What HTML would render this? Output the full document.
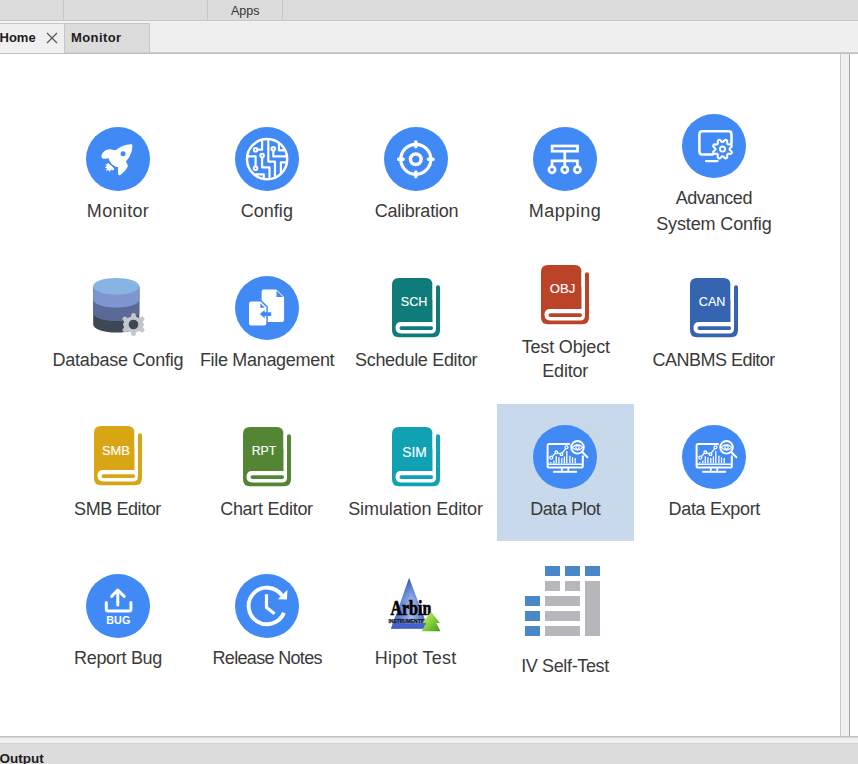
<!DOCTYPE html>
<html><head><meta charset="utf-8"><style>
*{margin:0;padding:0;box-sizing:border-box}
html,body{width:858px;height:764px;overflow:hidden;background:#fff;font-family:"Liberation Sans",sans-serif}
.abs{position:absolute}
.lb{position:absolute;width:400px;text-align:center;font-size:18px;line-height:22px;color:#3a3a3a;white-space:nowrap}
</style></head><body>
<!-- top bar -->
<div class="abs" style="left:0;top:0;width:858px;height:20px;background:#dcdcdc"></div>
<div class="abs" style="left:0;top:20px;width:858px;height:1px;background:#c6c6c6"></div>
<div class="abs" style="left:63px;top:0;width:1px;height:20px;background:#c8c8c8"></div>
<div class="abs" style="left:207px;top:0;width:1px;height:20px;background:#c8c8c8"></div>
<div class="abs" style="left:282px;top:0;width:1px;height:20px;background:#c8c8c8"></div>
<div class="abs" id="apps" style="left:231px;top:3px;font-size:12.5px;line-height:16px;color:#333">Apps</div>
<!-- tab row -->
<div class="abs" style="left:0;top:21px;width:858px;height:32px;background:#f0f0f0"></div>
<div class="abs" style="left:0;top:21px;width:150px;height:2px;background:#f4f4f4"></div>
<div class="abs" style="left:0;top:23px;width:64px;height:1px;background:#c8c8c8"></div>
<div class="abs" style="left:64px;top:23px;width:86px;height:30px;background:#dcdcdc;border:1px solid #c6c6c6;border-bottom:none"></div>
<div class="abs" id="home" style="left:-0.5px;top:30px;font-size:13px;font-weight:bold;line-height:16px;color:#1e1a22">Home</div>
<svg class="abs" style="left:46px;top:32px" width="12" height="12" viewBox="0 0 12 12"><path d="M1 1L11 11M11 1L1 11" stroke="#5a5a5a" stroke-width="1.3"/></svg>
<div class="abs" id="montab" style="left:71px;top:30px;font-size:13px;font-weight:bold;line-height:16px;color:#1e1a22;letter-spacing:0.4px">Monitor</div>
<div class="abs" style="left:64px;top:52px;width:794px;height:1px;background:#cbcbcb"></div>
<div class="abs" style="left:0;top:53px;width:858px;height:1px;background:#c0c0c0"></div>
<!-- content -->
<div class="abs" style="left:0;top:54px;width:840px;height:683px;background:#fff"></div>
<div class="abs" style="left:840px;top:54px;width:1px;height:683px;background:#c8c8c8"></div>
<div class="abs" style="left:841px;top:54px;width:8px;height:683px;background:#f0f0f0"></div>
<div class="abs" style="left:849px;top:54px;width:1px;height:683px;background:#a6a6a6"></div>
<div class="abs" style="left:0;top:736px;width:858px;height:1px;background:#c2c2c2"></div><div class="abs" style="left:0;top:737px;width:858px;height:1px;background:#d6d6d6"></div>
<div class="abs" style="left:0;top:738px;width:858px;height:5px;background:#f0f0f0"></div>
<div class="abs" style="left:0;top:743px;width:858px;height:1px;background:#d2d2d2"></div>
<div class="abs" style="left:0;top:744px;width:858px;height:20px;background:#dcdcdc"></div>
<div class="abs" id="output" style="left:-0.5px;top:751px;font-size:13.5px;font-weight:bold;line-height:16px;color:#1e1a22">Output</div>
<!-- highlight -->
<div class="abs" style="left:497px;top:404px;width:137px;height:137px;background:#c7d9ea"></div>
<!-- Row 1 -->
<svg class="abs" style="left:86px;top:127px" width="64" height="64" viewBox="0 0 64 64">
<circle cx="32" cy="32" r="32" fill="#4189f4"/>
<path fill="#fff" d="M45.8,17.2 C41,16.8 34.5,19 29.6,23.2 L23.6,22.2 C19.6,22.2 16.6,25 15.6,28 C15,30.4 16,31.8 17.6,31.8 L22.5,31.6 C23.2,35.5 26.5,39.8 31.9,40.6 L32,46.4 C32.2,48.2 33.8,48.6 35,47.6 C38.2,44.6 41.8,41 41.8,38.4 L40,34.3 C44.2,30 46.8,23.5 46.3,18 Z"/>
<circle cx="37.1" cy="26.7" r="2.5" fill="#4189f4"/>
<path fill="#fff" d="M25.6,38.6 C24.2,37.8 23.2,37 22.4,36.2 L19.6,37.4 L20.8,39 L18.8,40.6 L21,41.4 L19.8,43.8 L22.6,42.9 L23.4,45 L25,42.8 L27.6,43.4 L28,41.6 Z"/>
<path d="M22,31.4 C22.6,35.8 26.2,40.2 32,41.1" fill="none" stroke="#4189f4" stroke-width="1.3"/>
</svg>
<svg class="abs" style="left:235px;top:127px" width="64" height="64" viewBox="0 0 64 64">
<circle cx="32" cy="32" r="32" fill="#4189f4"/>
<g fill="none" stroke="#fff" stroke-width="2.2" stroke-linejoin="round">
<circle cx="32.1" cy="32.2" r="20.1" stroke-width="2.5"/>
<path d="M33.3,12 V34.6 H40 V52"/>
<path d="M38.3,23.6 V29.4 H52"/>
<path d="M43.9,15 V23.3 H49.5"/>
<path d="M52,35.3 H45.9 V47"/>
<path d="M22.4,22.7 H27.1 V12.5"/>
<path d="M27.1,30.5 V40.4 H34.5 V52.5"/>
<path d="M12,29.4 H20.6 V39.3"/>
<path d="M20,47.4 H28.8 V52.3"/>
</g>
<g fill="#4189f4" stroke="#fff" stroke-width="2">
<circle cx="38.3" cy="21.8" r="1.8"/>
<circle cx="20.6" cy="22.7" r="1.8"/>
<circle cx="27.1" cy="28.6" r="1.8"/>
<circle cx="20.6" cy="41.2" r="1.8"/>
</g>
</svg>
<svg class="abs" style="left:384px;top:127px" width="64" height="64" viewBox="0 0 64 64">
<circle cx="32" cy="32" r="32" fill="#4189f4"/>
<g fill="none" stroke="#fff" stroke-width="3">
<circle cx="31.8" cy="32.3" r="15" stroke-width="3.2"/>
<circle cx="31.8" cy="32.3" r="5.3" stroke-width="3.5"/>
<path d="M31.8,15 V19.6 M31.8,45 V49.6 M14.6,32.3 H19.2 M44.4,32.3 H49" stroke-width="3.6" stroke-linecap="round"/>
</g>
</svg>
<svg class="abs" style="left:533px;top:127px" width="64" height="64" viewBox="0 0 64 64">
<circle cx="32" cy="32" r="32" fill="#4189f4"/>
<g fill="none" stroke="#fff" stroke-width="2.7">
<rect x="19.1" y="19" width="25.4" height="5.2"/>
<path d="M31.8,24.2 V39.6 M19,39.6 V33.8 H44.4 V39.6"/>
<circle cx="19" cy="42.7" r="3.1"/>
<circle cx="31.8" cy="42.7" r="3.1"/>
<circle cx="44.4" cy="42.7" r="3.1"/>
</g>
</svg>
<svg class="abs" style="left:682px;top:114px" width="64" height="64" viewBox="0 0 64 64">
<circle cx="32" cy="32" r="32" fill="#4189f4"/>
<g fill="none" stroke="#fff" stroke-width="2.5" stroke-linecap="round">
<path d="M30.6,40.6 H20.4 Q17.4,40.6 17.4,37.6 V20.2 Q17.4,17.2 20.4,17.2 H46.5 Q49.5,17.2 49.5,20.2 V29.6"/>
<path d="M24,47.1 H35.6" stroke-width="2.1"/>
</g>
<path d="M47.60,35.10 L47.63,35.38 L47.72,35.67 L47.93,35.98 L48.31,36.34 L48.84,36.76 L49.34,37.22 L49.66,37.68 L49.78,38.12 L49.76,38.52 L49.65,38.89 L49.46,39.23 L49.19,39.53 L48.81,39.75 L48.26,39.85 L47.57,39.82 L46.89,39.75 L46.37,39.73 L46.01,39.80 L45.74,39.94 L45.52,40.12 L45.34,40.34 L45.20,40.61 L45.13,40.97 L45.15,41.49 L45.22,42.17 L45.25,42.86 L45.15,43.41 L44.93,43.79 L44.63,44.06 L44.29,44.25 L43.92,44.36 L43.52,44.38 L43.08,44.26 L42.62,43.94 L42.16,43.44 L41.74,42.91 L41.38,42.53 L41.07,42.32 L40.78,42.23 L40.50,42.20 L40.22,42.23 L39.93,42.32 L39.62,42.53 L39.26,42.91 L38.84,43.44 L38.38,43.94 L37.92,44.26 L37.48,44.38 L37.08,44.36 L36.71,44.25 L36.37,44.06 L36.07,43.79 L35.85,43.41 L35.75,42.86 L35.78,42.17 L35.85,41.49 L35.87,40.97 L35.80,40.61 L35.66,40.34 L35.48,40.12 L35.26,39.94 L34.99,39.80 L34.63,39.73 L34.11,39.75 L33.43,39.82 L32.74,39.85 L32.19,39.75 L31.81,39.53 L31.54,39.23 L31.35,38.89 L31.24,38.52 L31.22,38.12 L31.34,37.68 L31.66,37.22 L32.16,36.76 L32.69,36.34 L33.07,35.98 L33.28,35.67 L33.37,35.38 L33.40,35.10 L33.37,34.82 L33.28,34.53 L33.07,34.22 L32.69,33.86 L32.16,33.44 L31.66,32.98 L31.34,32.52 L31.22,32.08 L31.24,31.68 L31.35,31.31 L31.54,30.97 L31.81,30.67 L32.19,30.45 L32.74,30.35 L33.43,30.38 L34.11,30.45 L34.63,30.47 L34.99,30.40 L35.26,30.26 L35.48,30.08 L35.66,29.86 L35.80,29.59 L35.87,29.23 L35.85,28.71 L35.78,28.03 L35.75,27.34 L35.85,26.79 L36.07,26.41 L36.37,26.14 L36.71,25.95 L37.08,25.84 L37.48,25.82 L37.92,25.94 L38.38,26.26 L38.84,26.76 L39.26,27.29 L39.62,27.67 L39.93,27.88 L40.22,27.97 L40.50,28.00 L40.78,27.97 L41.07,27.88 L41.38,27.67 L41.74,27.29 L42.16,26.76 L42.62,26.26 L43.08,25.94 L43.52,25.82 L43.92,25.84 L44.29,25.95 L44.63,26.14 L44.93,26.41 L45.15,26.79 L45.25,27.34 L45.22,28.03 L45.15,28.71 L45.13,29.23 L45.20,29.59 L45.34,29.86 L45.52,30.08 L45.74,30.26 L46.01,30.40 L46.37,30.47 L46.89,30.45 L47.57,30.38 L48.26,30.35 L48.81,30.45 L49.19,30.67 L49.46,30.97 L49.65,31.31 L49.76,31.68 L49.78,32.08 L49.66,32.52 L49.34,32.98 L48.84,33.44 L48.31,33.86 L47.93,34.22 L47.72,34.53 L47.63,34.82 Z" fill="none" stroke="#fff" stroke-width="2.1" stroke-linejoin="round"/>
<circle cx="40.5" cy="35.1" r="2.6" fill="none" stroke="#fff" stroke-width="1.8"/>
</svg>
<!-- Row 2 -->
<svg class="abs" style="left:78px;top:268px" width="80" height="80" viewBox="0 0 80 80">
<path d="M15.2,18.3 V56.5 A23,8 0 0 0 61.3,56.5 V18.3 Z" fill="#3d4854"/>
<path d="M15.2,18.3 V45 A23,8 0 0 0 61.3,45 V18.3 Z" fill="#5a6a96"/>
<path d="M15.2,18.3 V31.6 A23,8 0 0 0 61.3,31.6 V18.3 Z" fill="#7f95cf"/>
<ellipse cx="38.2" cy="18.3" rx="23" ry="8.4" fill="#87b4e2"/>
<g transform="translate(55.5,56.5)">
<path fill="#c3c7cb" d="M-1.8,-11.3 H1.8 L2.6,-7.8 L5.9,-6.4 L8.9,-8.3 L11.3,-5.8 L9.4,-2.8 L10.5,0 L9.4,2.8 L11.3,5.8 L8.9,8.3 L5.9,6.4 L2.6,7.8 L1.8,11.3 H-1.8 L-2.6,7.8 L-5.9,6.4 L-8.9,8.3 L-11.3,5.8 L-9.4,2.8 L-10.5,0 L-9.4,-2.8 L-11.3,-5.8 L-8.9,-8.3 L-5.9,-6.4 L-2.6,-7.8 Z"/>
<circle r="4.8" fill="#3d4854"/>
</g>
</svg>
<svg class="abs" style="left:235px;top:276px" width="64" height="64" viewBox="0 0 64 64">
<circle cx="32" cy="32" r="32" fill="#4189f4"/>
<path fill="#fff" d="M28.6,13.5 H41.5 L49.1,21 V43.9 Q49.1,45.9 47.1,45.9 H28.6 Q26.6,45.9 26.6,43.9 V15.5 Q26.6,13.5 28.6,13.5 Z"/>
<path fill="#4189f4" d="M41.5,14.6 L48,21 H41.5 Z"/>
<path fill="#fff" stroke="#4189f4" stroke-width="3" paint-order="stroke" d="M16,25.5 H25.6 L31.3,31.2 V47.4 Q31.3,49.4 29.3,49.4 H16 Q14,49.4 14,47.4 V27.5 Q14,25.5 16,25.5 Z"/>
<path fill="#4189f4" d="M25.3,27.2 L29.8,31.7 H25.3 Z"/>
<path fill="#4189f4" d="M24.8,38.1 L29.7,33.9 V36.2 H36.2 V40.1 H29.7 V42.3 Z"/>
</svg>
<svg class="abs" style="left:392.2px;top:278.1px" width="50" height="62" viewBox="0 0 50 62">
<path fill="#0f7b7a" d="M0,7 Q0,0 7,0 H33.5 Q40.5,0 40.5,7 V22 H44 V9.3 Q44,7.3 46,7.3 Q48,7.3 48,9.3 V52.3 Q48,59.3 41,59.3 H7 Q0,59.3 0,52.3 Z"/>
<path fill="#fff" d="M40.5,7 H44 V50.4 Q44,55.4 39,55.4 H9.2 Q3.5,55.4 3.5,49.7 Q3.5,44 9.2,44 H40.5 Z"/>
<rect x="7.5" y="48.2" width="33.6" height="3.8" rx="1.9" fill="#0f7b7a"/>
<text x="22.05" y="28.3" text-anchor="middle" font-family="Liberation Sans" font-size="13" fill="#fff" stroke="#fff" stroke-width="0.15" textLength="26.6" lengthAdjust="spacingAndGlyphs">SCH</text>
</svg>
<svg class="abs" style="left:541.2px;top:265px" width="50" height="62" viewBox="0 0 50 62">
<path fill="#bb4428" d="M0,7 Q0,0 7,0 H33.5 Q40.5,0 40.5,7 V22 H44 V9.3 Q44,7.3 46,7.3 Q48,7.3 48,9.3 V52.3 Q48,59.3 41,59.3 H7 Q0,59.3 0,52.3 Z"/>
<path fill="#fff" d="M40.5,7 H44 V50.4 Q44,55.4 39,55.4 H9.2 Q3.5,55.4 3.5,49.7 Q3.5,44 9.2,44 H40.5 Z"/>
<rect x="7.5" y="48.2" width="33.6" height="3.8" rx="1.9" fill="#bb4428"/>
<text x="21.5" y="28.2" text-anchor="middle" font-family="Liberation Sans" font-size="13" fill="#fff" stroke="#fff" stroke-width="0.15" textLength="25.6" lengthAdjust="spacingAndGlyphs">OBJ</text>
</svg>
<svg class="abs" style="left:690.1px;top:278.4px" width="50" height="62" viewBox="0 0 50 62">
<path fill="#3565b0" d="M0,7 Q0,0 7,0 H33.5 Q40.5,0 40.5,7 V22 H44 V9.3 Q44,7.3 46,7.3 Q48,7.3 48,9.3 V52.3 Q48,59.3 41,59.3 H7 Q0,59.3 0,52.3 Z"/>
<path fill="#fff" d="M40.5,7 H44 V50.4 Q44,55.4 39,55.4 H9.2 Q3.5,55.4 3.5,49.7 Q3.5,44 9.2,44 H40.5 Z"/>
<rect x="7.5" y="48.2" width="33.6" height="3.8" rx="1.9" fill="#3565b0"/>
<text x="22.1" y="28.3" text-anchor="middle" font-family="Liberation Sans" font-size="13" fill="#fff" stroke="#fff" stroke-width="0.15" textLength="26.6" lengthAdjust="spacingAndGlyphs">CAN</text>
</svg>
<svg class="abs" style="left:94.1px;top:426.2px" width="50" height="62" viewBox="0 0 50 62">
<path fill="#d8a614" d="M0,7 Q0,0 7,0 H33.5 Q40.5,0 40.5,7 V22 H44 V9.3 Q44,7.3 46,7.3 Q48,7.3 48,9.3 V52.3 Q48,59.3 41,59.3 H7 Q0,59.3 0,52.3 Z"/>
<path fill="#fff" d="M40.5,7 H44 V50.4 Q44,55.4 39,55.4 H9.2 Q3.5,55.4 3.5,49.7 Q3.5,44 9.2,44 H40.5 Z"/>
<rect x="7.5" y="48.2" width="33.6" height="3.8" rx="1.9" fill="#d8a614"/>
<text x="21.9" y="28.5" text-anchor="middle" font-family="Liberation Sans" font-size="13" fill="#fff" stroke="#fff" stroke-width="0.15" textLength="28" lengthAdjust="spacingAndGlyphs">SMB</text>
</svg>
<svg class="abs" style="left:243.2px;top:427.2px" width="50" height="62" viewBox="0 0 50 62">
<path fill="#538535" d="M0,7 Q0,0 7,0 H33.5 Q40.5,0 40.5,7 V22 H44 V9.3 Q44,7.3 46,7.3 Q48,7.3 48,9.3 V52.3 Q48,59.3 41,59.3 H7 Q0,59.3 0,52.3 Z"/>
<path fill="#fff" d="M40.5,7 H44 V50.4 Q44,55.4 39,55.4 H9.2 Q3.5,55.4 3.5,49.7 Q3.5,44 9.2,44 H40.5 Z"/>
<rect x="7.5" y="48.2" width="33.6" height="3.8" rx="1.9" fill="#538535"/>
<text x="21" y="28" text-anchor="middle" font-family="Liberation Sans" font-size="13" fill="#fff" stroke="#fff" stroke-width="0.15" textLength="24.6" lengthAdjust="spacingAndGlyphs">RPT</text>
</svg>
<svg class="abs" style="left:392.1px;top:427.2px" width="50" height="62" viewBox="0 0 50 62">
<path fill="#10a2b2" d="M0,7 Q0,0 7,0 H33.5 Q40.5,0 40.5,7 V22 H44 V9.3 Q44,7.3 46,7.3 Q48,7.3 48,9.3 V52.3 Q48,59.3 41,59.3 H7 Q0,59.3 0,52.3 Z"/>
<path fill="#fff" d="M40.5,7 H44 V50.4 Q44,55.4 39,55.4 H9.2 Q3.5,55.4 3.5,49.7 Q3.5,44 9.2,44 H40.5 Z"/>
<rect x="7.5" y="48.2" width="33.6" height="3.8" rx="1.9" fill="#10a2b2"/>
<text x="22.5" y="29.6" text-anchor="middle" font-family="Liberation Sans" font-size="14" fill="#fff" stroke="#fff" stroke-width="0.15" textLength="24.4" lengthAdjust="spacingAndGlyphs">SIM</text>
</svg>
<svg class="abs" style="left:533px;top:425px" width="64" height="64" viewBox="0 0 64 64">
<circle cx="32" cy="32" r="32" fill="#4189f4"/>
<g fill="none" stroke="#fff" stroke-width="2" stroke-linejoin="round">
<path d="M36.8,19.1 H16.2 Q14.6,19.1 14.6,20.7 V40.9 Q14.6,42.5 16.2,42.5 H48.2 Q49.8,42.5 49.8,40.9 V30.6"/>
<path d="M14.6,39.2 H49.8" stroke-width="1.6"/>
<path d="M28.8,42.5 V46 M35.3,42.5 V46" stroke-width="1.7"/>
<path d="M20.1,46.8 H44"/>
<path d="M17.8,38.2 V37 M20.9,38.2 V35.5 M23.3,38.2 V31.3 M25.9,38.2 V32.3 M28.8,38.2 V33.1 M31.4,38.2 V31.5 M33.8,38.2 V26 M36.9,38.2 V30.7 M39.5,38.2 V32.3 M42.2,38.2 V33.1" stroke-width="1.3"/>
<path d="M18.3,32.6 L23.3,27.3 L28.5,29.2 L33.5,22.3" stroke-width="1.3"/>
<circle cx="44.5" cy="22.3" r="6.3" stroke-width="1.9"/>
<path d="M49.2,27 L54.4,32.2" stroke-linecap="round" stroke-width="2"/>
<path d="M39.2,22.4 Q44.5,17.2 49.8,22.4 Q44.5,27.6 39.2,22.4 Z" stroke-width="1.3"/>
<circle cx="44.5" cy="22.4" r="1.7" stroke-width="1.2"/>
</g>
<g fill="#4189f4" stroke="#fff" stroke-width="1.3">
<circle cx="18.3" cy="32.6" r="1.5"/><circle cx="23.3" cy="27.3" r="1.3"/><circle cx="28.5" cy="29.2" r="1.3"/><circle cx="33.5" cy="22.3" r="1.5"/>
</g>
</svg>
<svg class="abs" style="left:682px;top:425px" width="64" height="64" viewBox="0 0 64 64">
<circle cx="32" cy="32" r="32" fill="#4189f4"/>
<g fill="none" stroke="#fff" stroke-width="2" stroke-linejoin="round">
<path d="M36.8,19.1 H16.2 Q14.6,19.1 14.6,20.7 V40.9 Q14.6,42.5 16.2,42.5 H48.2 Q49.8,42.5 49.8,40.9 V30.6"/>
<path d="M14.6,39.2 H49.8" stroke-width="1.6"/>
<path d="M28.8,42.5 V46 M35.3,42.5 V46" stroke-width="1.7"/>
<path d="M20.1,46.8 H44"/>
<path d="M17.8,38.2 V37 M20.9,38.2 V35.5 M23.3,38.2 V31.3 M25.9,38.2 V32.3 M28.8,38.2 V33.1 M31.4,38.2 V31.5 M33.8,38.2 V26 M36.9,38.2 V30.7 M39.5,38.2 V32.3 M42.2,38.2 V33.1" stroke-width="1.3"/>
<path d="M18.3,32.6 L23.3,27.3 L28.5,29.2 L33.5,22.3" stroke-width="1.3"/>
<circle cx="44.5" cy="22.3" r="6.3" stroke-width="1.9"/>
<path d="M49.2,27 L54.4,32.2" stroke-linecap="round" stroke-width="2"/>
<path d="M39.2,22.4 Q44.5,17.2 49.8,22.4 Q44.5,27.6 39.2,22.4 Z" stroke-width="1.3"/>
<circle cx="44.5" cy="22.4" r="1.7" stroke-width="1.2"/>
</g>
<g fill="#4189f4" stroke="#fff" stroke-width="1.3">
<circle cx="18.3" cy="32.6" r="1.5"/><circle cx="23.3" cy="27.3" r="1.3"/><circle cx="28.5" cy="29.2" r="1.3"/><circle cx="33.5" cy="22.3" r="1.5"/>
</g>
</svg>
<svg class="abs" style="left:86px;top:574px" width="64" height="64" viewBox="0 0 64 64">
<circle cx="32" cy="32" r="32" fill="#4189f4"/>
<g fill="none" stroke="#fff" stroke-width="3" stroke-linecap="round" stroke-linejoin="round">
<path d="M31.8,16.5 V31"/>
<path d="M25.6,22.4 L31.8,16 L38.2,22.4"/>
<path d="M20.3,28.4 V35.2 Q20.3,37 22.1,37 H43.1 Q44.9,37 44.9,35.2 V28.4"/>
</g>
<text x="32.3" y="49.6" text-anchor="middle" font-family="Liberation Sans" font-weight="bold" font-size="10.8" fill="#fff">BUG</text>
</svg>
<svg class="abs" style="left:235px;top:574px" width="64" height="64" viewBox="0 0 64 64">
<circle cx="32" cy="32" r="32" fill="#4189f4"/>
<g fill="none" stroke="#fff" stroke-width="3.9">
<path d="M46.9,21.4 A18.3,18.3 0 1 0 48.9,38.8"/>
<path d="M31.5,20.3 V33.4 L39.6,39.8" stroke-width="3.2"/>
</g>
<path fill="#fff" d="M42.8,25.2 L52.4,15.8 L52,25.6 Z"/>
</svg>
<svg class="abs" style="left:376px;top:566px" width="80" height="80" viewBox="0 0 80 80">
<defs>
<linearGradient id="hpg" x1="0" y1="0" x2="1" y2="0">
<stop offset="0" stop-color="#2a52c0"/><stop offset="0.55" stop-color="#a3b9ee"/><stop offset="1" stop-color="#2a52c0"/>
</linearGradient>
<linearGradient id="hpt" x1="0" y1="0" x2="0" y2="1">
<stop offset="0" stop-color="#2050b8" stop-opacity="0.9"/><stop offset="0.45" stop-color="#2050b8" stop-opacity="0"/>
</linearGradient>
<linearGradient id="grn" x1="0" y1="0" x2="1" y2="1">
<stop offset="0" stop-color="#d0f27a"/><stop offset="0.5" stop-color="#8ccf3e"/><stop offset="1" stop-color="#3f9a1c"/>
</linearGradient>
</defs>
<path d="M33.1,11.9 L15.1,62.6 H52.4 Z" fill="url(#hpg)"/>
<path d="M33.1,11.9 L15.1,62.6 H52.4 Z" fill="url(#hpt)"/>
<path d="M17,57.6 H50.6 L52.4,62.8 H15.1 Z" fill="#3f62cc"/>
<text x="34.9" y="49.2" text-anchor="middle" font-family="Liberation Serif" font-weight="bold" font-size="21.5" fill="#000" stroke="#000" stroke-width="0.7" textLength="41" lengthAdjust="spacingAndGlyphs">Arbin</text>
<text x="30.2" y="57.1" text-anchor="middle" font-family="Liberation Sans" font-weight="bold" font-size="5.6" fill="#111" stroke="#111" stroke-width="0.25" textLength="35.5" lengthAdjust="spacingAndGlyphs">INSTRUMENTS</text>
<path d="M55.1,45.7 L46.3,57.1 H50 L45.7,65.3 H64.4 L60.2,57.1 H63.9 Z" fill="url(#grn)"/>
</svg>
<div class="abs" style="left:525px;top:566px;width:75px;height:70px"><div class="abs" style="left:20px;top:0px;width:15px;height:9.8px;background:#4a87c9"></div><div class="abs" style="left:40px;top:0px;width:15px;height:9.8px;background:#4a87c9"></div><div class="abs" style="left:60px;top:0px;width:15px;height:9.8px;background:#4a87c9"></div><div class="abs" style="left:0px;top:30px;width:15px;height:9.8px;background:#4a87c9"></div><div class="abs" style="left:0px;top:45px;width:15px;height:9.8px;background:#4a87c9"></div><div class="abs" style="left:0px;top:60px;width:15px;height:9.8px;background:#4a87c9"></div><div class="abs" style="left:20px;top:15px;width:15px;height:9.8px;background:#b7b7bb"></div><div class="abs" style="left:40px;top:15px;width:15px;height:9.8px;background:#b7b7bb"></div><div class="abs" style="left:60px;top:15px;width:15px;height:54.8px;background:#b7b7bb"></div><div class="abs" style="left:20px;top:30px;width:35px;height:9.8px;background:#b7b7bb"></div><div class="abs" style="left:20px;top:45px;width:35px;height:9.8px;background:#b7b7bb"></div><div class="abs" style="left:20px;top:60px;width:35px;height:9.8px;background:#b7b7bb"></div></div>
<div class="lb" id="lb0" style="left:-82.00px;top:199.76px;letter-spacing:0.333px"><span>Monitor</span></div><div class="lb" id="lb1" style="left:66.80px;top:199.76px;letter-spacing:0.040px"><span>Config</span></div><div class="lb" id="lb2" style="left:216.50px;top:199.76px;letter-spacing:-0.220px"><span>Calibration</span></div><div class="lb" id="lb3" style="left:365.00px;top:199.76px;letter-spacing:0.467px"><span>Mapping</span></div><div class="lb" id="lb4" style="left:513.80px;top:186.66px;letter-spacing:-0.471px"><span>Advanced</span></div><div class="lb" id="lb5" style="left:513.90px;top:212.76px;letter-spacing:-0.125px"><span>System Config</span></div><div class="lb" id="lb6" style="left:-82.10px;top:349.26px;letter-spacing:-0.221px"><span>Database Config</span></div><div class="lb" id="lb7" style="left:67.10px;top:349.26px;letter-spacing:-0.314px"><span>File Management</span></div><div class="lb" id="lb8" style="left:216.20px;top:349.26px;letter-spacing:-0.325px"><span>Schedule Editor</span></div><div class="lb" id="lb9" style="left:365.80px;top:335.66px;letter-spacing:-0.170px"><span>Test Object</span></div><div class="lb" id="lb10" style="left:365.20px;top:360.26px;letter-spacing:-0.200px"><span>Editor</span></div><div class="lb" id="lb11" style="left:513.70px;top:349.26px;letter-spacing:-0.525px"><span>CANBMS Editor</span></div><div class="lb" id="lb12" style="left:-82.50px;top:497.76px;letter-spacing:-0.411px"><span>SMB Editor</span></div><div class="lb" id="lb13" style="left:66.50px;top:497.76px;letter-spacing:-0.282px"><span>Chart Editor</span></div><div class="lb" id="lb14" style="left:215.50px;top:497.76px;letter-spacing:-0.087px"><span>Simulation Editor</span></div><div class="lb" id="lb15" style="left:365.30px;top:497.76px;letter-spacing:-0.425px"><span>Data Plot</span></div><div class="lb" id="lb16" style="left:514.30px;top:497.76px;letter-spacing:-0.330px"><span>Data Export</span></div><div class="lb" id="lb17" style="left:-82.00px;top:646.76px;letter-spacing:-0.300px"><span>Report Bug</span></div><div class="lb" id="lb18" style="left:67.20px;top:646.76px;letter-spacing:-0.675px"><span>Release Notes</span></div><div class="lb" id="lb19" style="left:215.60px;top:646.76px;letter-spacing:0.178px"><span>Hipot Test</span></div><div class="lb" id="lb20" style="left:365.00px;top:654.76px;letter-spacing:-0.364px"><span>IV Self-Test</span></div>
</body></html>
